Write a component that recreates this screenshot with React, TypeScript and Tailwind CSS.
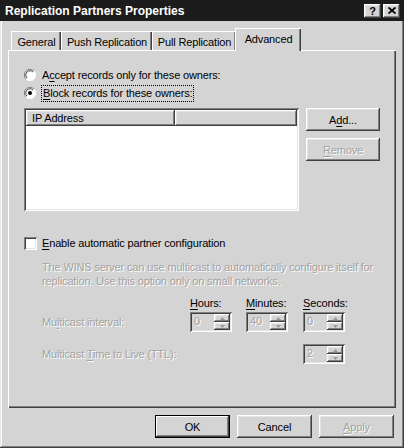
import React from "react";

const raised =
  "shadow-[inset_-1px_-1px_0_#404040,inset_1px_1px_0_#ffffff,inset_-2px_-2px_0_#808080,inset_2px_2px_0_#e4e4e4]";
const sunken =
  "shadow-[inset_1px_1px_0_#808080,inset_-1px_-1px_0_#ffffff,inset_2px_2px_0_#404040,inset_-2px_-2px_0_#e4e4e4]";
const disabledText = "text-[#a2a2a2] [text-shadow:1px_1px_0_#ffffff]";

const Key = ({ children }: { children: React.ReactNode }) => (
  <span className="underline underline-offset-[2px]">{children}</span>
);

const Radio = ({ checked }: { checked?: boolean }) => (
  <svg width="12" height="12" viewBox="0 0 12 12" className="shrink-0">
    <circle cx="6" cy="6" r="5.5" fill="#ffffff" />
    <path d="M10 2 A5.5 5.5 0 0 0 2 10" stroke="#808080" strokeWidth="1" fill="none" />
    <path d="M9 3 A4.2 4.2 0 0 0 3 9" stroke="#404040" strokeWidth="1" fill="none" />
    <path d="M2 10 A5.5 5.5 0 0 0 10 2" stroke="#ffffff" strokeWidth="1" fill="none" />
    {checked && <circle cx="6" cy="6" r="2" fill="#000000" />}
  </svg>
);

const TabItem = ({ label, w, active }: { label: string; w: string; active?: boolean }) =>
  active ? (
    <div
      className={`${w} h-[23px] -mb-px -ml-[1px] z-10 relative bg-[#d4d4d4] flex items-start justify-center pt-[3px] border-t border-l border-white shadow-[inset_-1px_0_0_#404040,inset_-2px_0_0_#808080]`}
    >
      {label}
    </div>
  ) : (
    <div
      className={`${w} h-[19px] flex items-center justify-center pt-[1px] border-t border-l border-white shadow-[inset_-1px_0_0_#404040,inset_-2px_0_0_#808080]`}
    >
      {label}
    </div>
  );

const Spinner = ({ value }: { value: string }) => (
  <div className={`w-[42px] h-[20px] ${sunken} flex items-stretch p-[2px]`}>
    <div className={`flex-1 pl-[2px] leading-[15px] ${disabledText}`}>{value}</div>
    <div className="w-[16px] flex flex-col">
      <div className={`flex-1 ${raised} flex items-center justify-center`}>
        <svg width="5" height="3" viewBox="0 0 5 3">
          <path d="M2.5 0 L5 3 L0 3 Z" fill="#9a9a9a" />
        </svg>
      </div>
      <div className={`flex-1 ${raised} flex items-center justify-center`}>
        <svg width="5" height="3" viewBox="0 0 5 3">
          <path d="M0 0 L5 0 L2.5 3 Z" fill="#9a9a9a" />
        </svg>
      </div>
    </div>
  </div>
);

const Btn = ({
  children,
  w = "w-[75px]",
  disabled,
  def,
}: {
  children: React.ReactNode;
  w?: string;
  disabled?: boolean;
  def?: boolean;
}) => (
  <div
    className={`${w} h-[23px] flex items-center justify-center ${
      def
        ? "border border-black shadow-[inset_-1px_-1px_0_#404040,inset_1px_1px_0_#ffffff,inset_-2px_-2px_0_#808080]"
        : raised
    } ${disabled ? disabledText : ""}`}
  >
    {children}
  </div>
);

export default function App() {
  return (
    <div
      className={`w-[404px] h-[448px] bg-[#d4d4d4] flex flex-col text-[11px] leading-[14px] tracking-[-0.15px] text-black font-['Liberation_Sans',Arial,sans-serif] shadow-[inset_-1px_-1px_0_#404040,inset_1px_1px_0_#e4e4e4,inset_-2px_-2px_0_#808080,inset_2px_2px_0_#ffffff]`}
    >
      {/* title bar */}
      <div className="h-[21px] bg-[#1c1c1c] flex items-center justify-between pl-[5px] pr-[4px] tracking-normal">
        <span className="text-white font-bold text-[12px]">Replication Partners Properties</span>
        <div className="flex gap-[2px]">
          <div className={`w-[17px] h-[14px] ${raised} bg-[#d4d4d4] flex items-center justify-center font-bold text-[11px]`}>
            ?
          </div>
          <div className={`w-[17px] h-[14px] ${raised} bg-[#d4d4d4] flex items-center justify-center`}>
            <svg width="8" height="7" viewBox="0 0 8 7">
              <path d="M0.5 0.5 L7.5 6.5 M7.5 0.5 L0.5 6.5" stroke="#000" strokeWidth="1.8" />
            </svg>
          </div>
        </div>
      </div>

      {/* tabs */}
      <div className="flex items-end h-[22px] mt-[7px] pl-[11px]">
        <TabItem label="General" w="w-[50px]" />
        <TabItem label="Push Replication" w="w-[91px]" />
        <TabItem label="Pull Replication" w="w-[84px]" />
        <TabItem label="Advanced" w="w-[66px]" active />
      </div>

      {/* tab panel */}
      <div className="mx-[8px] h-[358px] border-t border-l border-white shadow-[inset_-1px_-1px_0_#404040,inset_-2px_-2px_0_#808080] pl-[15px] pt-[15px]">
        <div className="flex items-center h-[18px] gap-[6px]">
          <Radio />
          <span>
            A<Key>c</Key>cept records only for these owners:
          </span>
        </div>
        <div className="flex items-center h-[18px] gap-[5px]">
          <Radio checked />
          <span className="px-[1px] border border-dotted border-black leading-[15px]">
            <Key>B</Key>lock records for these owners:
          </span>
        </div>

        <div className="flex mt-[6px]">
          <div className={`w-[275px] h-[103px] bg-white ${sunken} p-[2px] flex flex-col`}>
            <div className="flex h-[16px]">
              <div className={`w-[149px] bg-[#d4d4d4] ${raised} pl-[6px] flex items-center`}>IP Address</div>
              <div className={`flex-1 bg-[#d4d4d4] ${raised}`} />
            </div>
          </div>
          <div className="ml-[7px] flex flex-col gap-[7px]">
            <Btn w="w-[74px]">
              A<Key>d</Key>d...
            </Btn>
            <Btn w="w-[74px]" disabled>
              <Key>R</Key>emove
            </Btn>
          </div>
        </div>

        <div className="flex items-center h-[18px] mt-[23px] gap-[5px]">
          <div className={`w-[13px] h-[13px] bg-white ${sunken}`} />
          <span>
            <Key>E</Key>nable automatic partner configuration
          </span>
        </div>

        <div className={`ml-[18px] mt-[8px] ${disabledText}`}>
          The WINS server can use multicast to automatically configure itself for
          <br />
          replication. Use this option only on small networks.
        </div>

        <div className="flex mt-[8px] h-[14px]">
          <div className="w-[166px]" />
          <div className="w-[56px]">
            <Key>H</Key>ours:
          </div>
          <div className="w-[57px]">
            <Key>M</Key>inutes:
          </div>
          <div>
            <Key>S</Key>econds:
          </div>
        </div>

        <div className="flex items-center mt-[2px]">
          <div className={`w-[166px] pl-[18px] ${disabledText}`}>
            Mu<Key>l</Key>ticast interval:
          </div>
          <div className="w-[56px]">
            <Spinner value="0" />
          </div>
          <div className="w-[57px]">
            <Spinner value="40" />
          </div>
          <Spinner value="0" />
        </div>

        <div className="flex items-center mt-[12px]">
          <div className={`w-[279px] pl-[18px] ${disabledText}`}>
            Multicast <Key>T</Key>ime to Live (TTL):
          </div>
          <Spinner value="2" />
        </div>
      </div>

      {/* dialog buttons */}
      <div className="flex justify-end gap-[7px] mt-[7px] pr-[10px]">
        <Btn def>OK</Btn>
        <Btn>Cancel</Btn>
        <Btn disabled>
          <Key>A</Key>pply
        </Btn>
      </div>
    </div>
  );
}
